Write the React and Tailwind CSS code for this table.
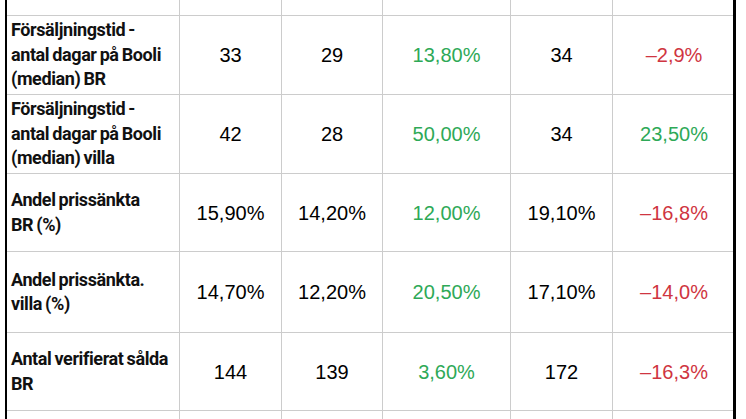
import React from "react";

const G = "text-[#2ea957]";
const R = "text-[#cf3541]";
const K = "text-black";

const rows = [
  { h: "h-[16px]", label: [], vals: [] },
  {
    h: "h-[79px]",
    label: ["Försäljningstid -", "antal dagar på Booli", "(median) BR"],
    vals: [["33", K], ["29", K], ["13,80%", G], ["34", K], ["–2,9%", R]],
  },
  {
    h: "h-[79px]",
    label: ["Försäljningstid -", "antal dagar på Booli", "(median) villa"],
    vals: [["42", K], ["28", K], ["50,00%", G], ["34", K], ["23,50%", G]],
  },
  {
    h: "h-[78px]",
    label: ["Andel prissänkta", "BR (%)"],
    vals: [["15,90%", K], ["14,20%", K], ["12,00%", G], ["19,10%", K], ["–16,8%", R]],
  },
  {
    h: "h-[81px]",
    label: ["Andel prissänkta.", "villa (%)"],
    vals: [["14,70%", K], ["12,20%", K], ["20,50%", G], ["17,10%", K], ["–14,0%", R]],
  },
  {
    h: "h-[78px]",
    label: ["Antal verifierat sålda", "BR"],
    vals: [["144", K], ["139", K], ["3,60%", G], ["172", K], ["–16,3%", R]],
  },
  { h: "h-[20px]", label: [], vals: [] },
];

export default function App() {
  return (
    <div className="w-[746px] h-[419px] overflow-hidden bg-white">
      <div className="ml-[5px] w-[731px] border-l-2 border-r-[3px] border-black">
        {rows.map((r, i) => (
          <div
            key={i}
            className={`grid grid-cols-[173px_102px_101px_128px_102px_122px] ${r.h} ${
              i < rows.length - 1 ? "border-b border-[#cccccc]" : ""
            }`}
          >
            <div className="border-r border-[#cccccc] flex flex-col justify-center pl-[4px] font-['Roboto',sans-serif] font-bold text-[18px] leading-[24.5px] text-[#111] tracking-[-0.4px] [word-spacing:-1px]">
              {r.label.map((l, j) => (
                <div key={j} className="whitespace-nowrap">{l}</div>
              ))}
            </div>
            {[0, 1, 2, 3, 4].map((c) => {
              const v = r.vals[c];
              return (
                <div
                  key={c}
                  className={`${c < 4 ? "border-r border-[#cccccc]" : ""} flex items-center justify-center font-['Liberation_Sans',Arial,sans-serif] text-[20px] ${
                    v ? v[1] : ""
                  }`}
                >
                  {v ? v[0] : ""}
                </div>
              );
            })}
          </div>
        ))}
      </div>
    </div>
  );
}
